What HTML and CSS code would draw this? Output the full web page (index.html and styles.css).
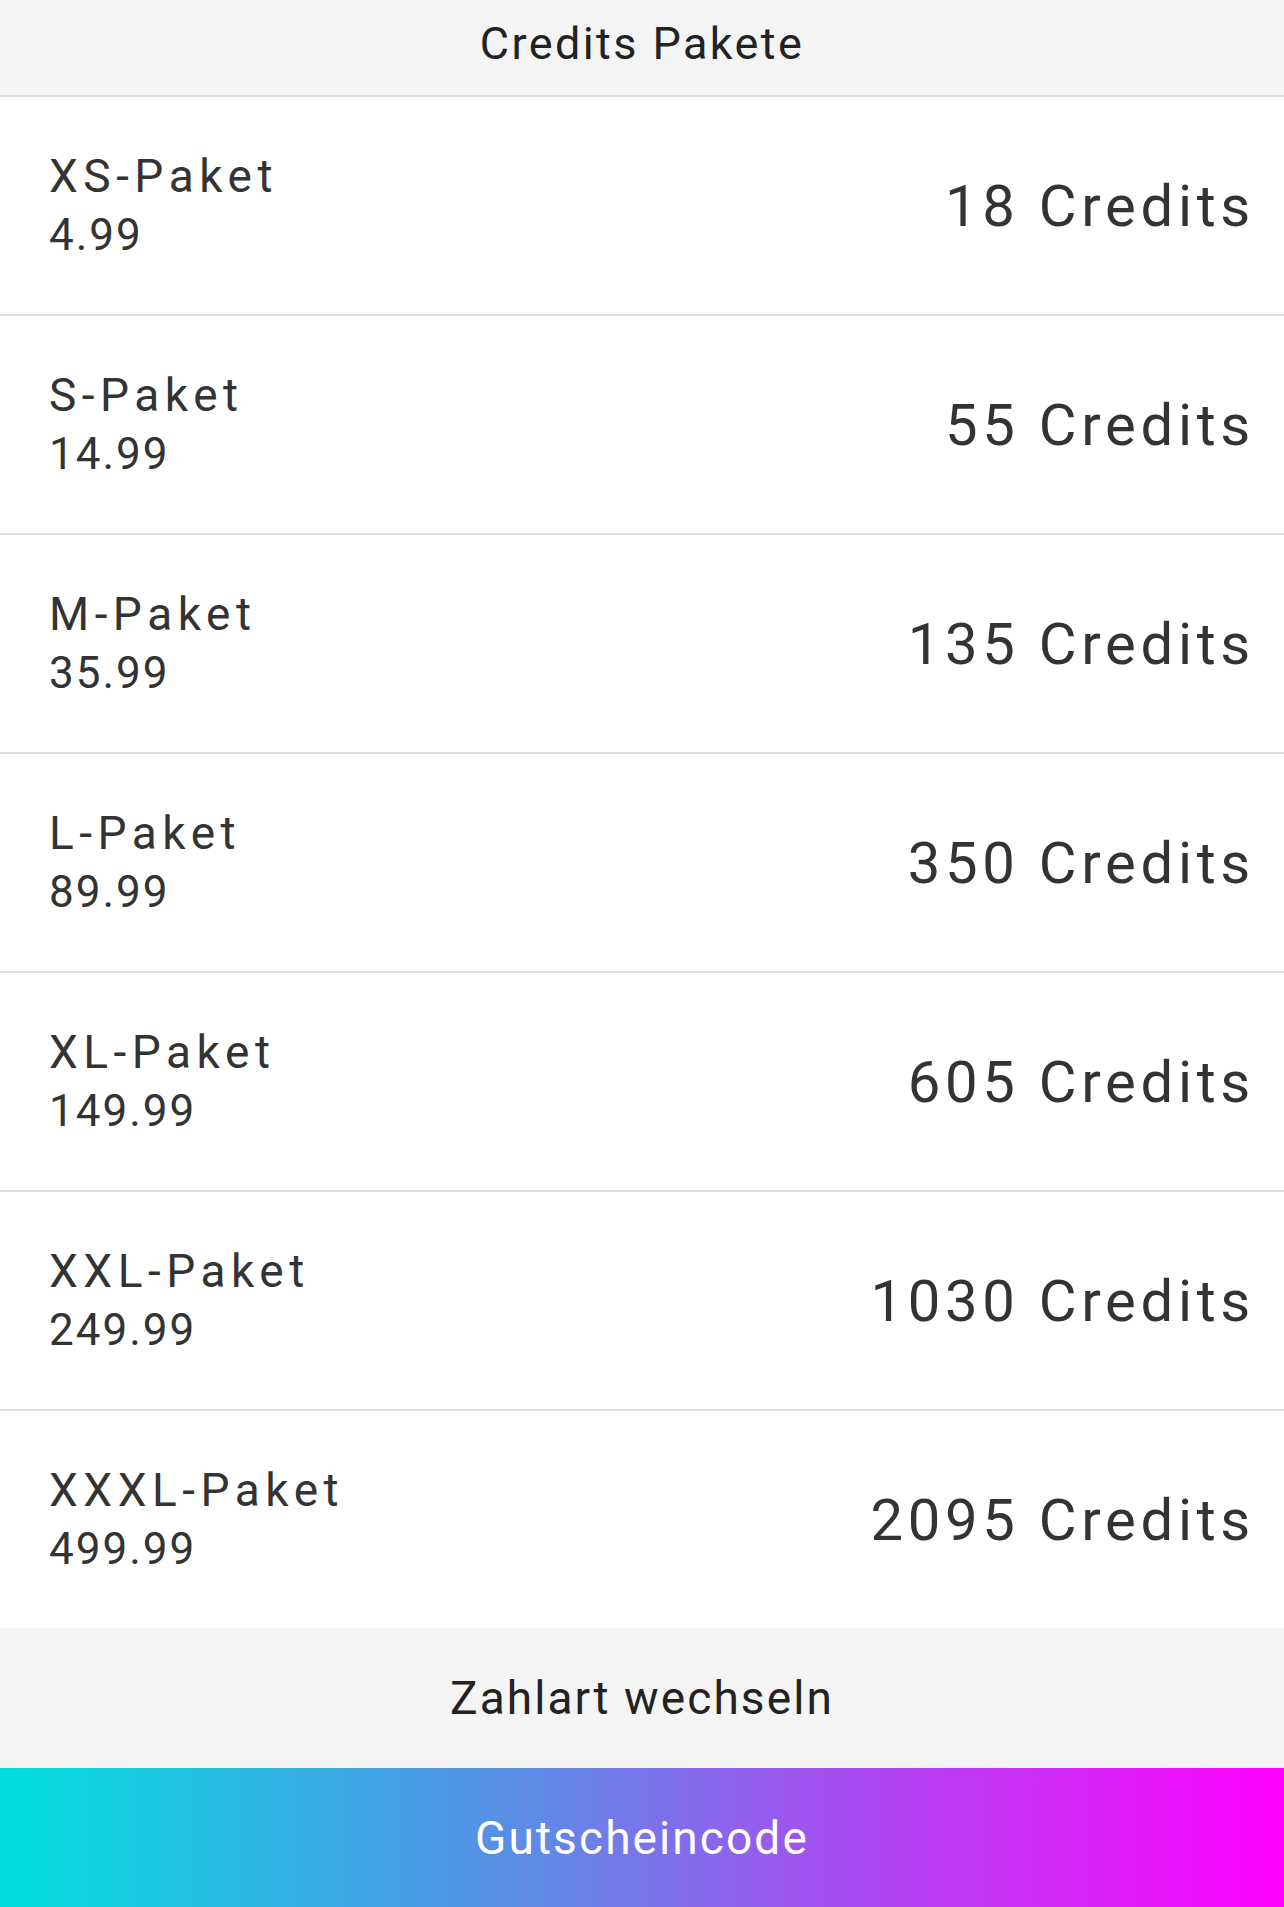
FILE: index.html
```html
<!DOCTYPE html>
<html lang="de">
<head>
<meta charset="utf-8">
<title>Credits Pakete</title>
<link rel="stylesheet" href="styles.css">
</head>
<body>
<div class="screen">
  <header class="topbar">Credits Pakete</header>
  <main class="list">
    <div class="row"><div class="info"><div class="name">XS-Paket</div><div class="price">4.99</div></div><div class="credits">18 Credits</div></div>
    <div class="row"><div class="info"><div class="name">S-Paket</div><div class="price">14.99</div></div><div class="credits">55 Credits</div></div>
    <div class="row"><div class="info"><div class="name">M-Paket</div><div class="price">35.99</div></div><div class="credits">135 Credits</div></div>
    <div class="row"><div class="info"><div class="name">L-Paket</div><div class="price">89.99</div></div><div class="credits">350 Credits</div></div>
    <div class="row"><div class="info"><div class="name">XL-Paket</div><div class="price">149.99</div></div><div class="credits">605 Credits</div></div>
    <div class="row"><div class="info"><div class="name">XXL-Paket</div><div class="price">249.99</div></div><div class="credits">1030 Credits</div></div>
    <div class="row last"><div class="info"><div class="name">XXXL-Paket</div><div class="price">499.99</div></div><div class="credits">2095 Credits</div></div>
  </main>
  <div class="btn pay">Zahlart wechseln</div>
  <div class="btn voucher">Gutscheincode</div>
</div>
</body>
</html>
```
FILE: styles.css
```css
html, body {
  margin: 0;
  padding: 0;
  background: #ffffff;
}
.screen {
  width: 1284px;
  font-family: Roboto, "Open Sans", sans-serif;
  color: #333333;
}
.topbar {
  height: 95px;
  box-sizing: border-box;
  padding-bottom: 8px;
  background: #f4f4f4;
  border-bottom: 2px solid #dcdcdc;
  display: flex;
  align-items: center;
  justify-content: center;
  font-size: 45px;
  letter-spacing: 2.4px;
  color: #222222;
  height: 97px;
}
.list {
  display: flex;
  flex-direction: column;
}
.row {
  height: 217px;
  border-bottom: 2px solid #dedede;
  display: flex;
  align-items: center;
  justify-content: space-between;
  padding: 0 29px 0 49px;
}
.row.last {
  border-bottom: none;
}
.info {
  display: flex;
  flex-direction: column;
}
.name {
  font-size: 46px;
  line-height: 59px;
  letter-spacing: 5.5px;
}
.price {
  font-size: 44px;
  line-height: 59px;
  letter-spacing: 2px;
}
.credits {
  font-size: 58px;
  letter-spacing: 4.7px;
}
.btn {
  display: flex;
  align-items: center;
  justify-content: center;
  font-size: 46px;
  letter-spacing: 2.1px;
}
.pay {
  height: 140px;
  background: #f4f4f4;
  color: #222222;
}
.voucher {
  height: 139px;
  background: linear-gradient(to right, #00dfdf 0%, #5a8ee6 40%, #a64ef0 65%, #ff00ff 100%);
  color: #ffffff;
}
```
